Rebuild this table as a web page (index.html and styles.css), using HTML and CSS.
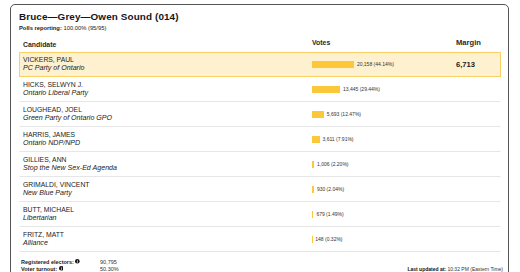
FILE: index.html
```html
<!DOCTYPE html>
<html lang="en">
<head>
<meta charset="utf-8">
<title>Bruce—Grey—Owen Sound (014)</title>
<link rel="stylesheet" href="styles.css">
</head>
<body>
<div class="card">
  <h1 class="title">Bruce—Grey—Owen Sound (014)</h1>
  <p class="polls"><b>Polls reporting:</b> 100.00% (95/95)</p>
  <div class="table">
    <div class="row head">
      <div class="cand">Candidate</div>
      <div class="votes">Votes</div>
      <div class="margin">Margin</div>
    </div>
    <div class="row lead">
      <div class="cand"><div class="name">VICKERS, PAUL</div><div class="party">PC Party of Ontario</div></div>
      <div class="votes"><span class="bar" style="width:41.9px"></span><span class="num">20,158 (44.14%)</span></div>
      <div class="margin">6,713</div>
    </div>
    <div class="row">
      <div class="cand"><div class="name">HICKS, SELWYN J.</div><div class="party">Ontario Liberal Party</div></div>
      <div class="votes"><span class="bar" style="width:28px"></span><span class="num">13,445 (29.44%)</span></div>
      <div class="margin"></div>
    </div>
    <div class="row">
      <div class="cand"><div class="name">LOUGHEAD, JOEL</div><div class="party">Green Party of Ontario GPO</div></div>
      <div class="votes"><span class="bar" style="width:11.8px"></span><span class="num">5,693 (12.47%)</span></div>
      <div class="margin"></div>
    </div>
    <div class="row">
      <div class="cand"><div class="name">HARRIS, JAMES</div><div class="party">Ontario NDP/NPD</div></div>
      <div class="votes"><span class="bar" style="width:7.5px"></span><span class="num">3,611 (7.91%)</span></div>
      <div class="margin"></div>
    </div>
    <div class="row">
      <div class="cand"><div class="name">GILLIES, ANN</div><div class="party">Stop the New Sex-Ed Agenda</div></div>
      <div class="votes"><span class="bar" style="width:2.1px"></span><span class="num">1,006 (2.20%)</span></div>
      <div class="margin"></div>
    </div>
    <div class="row">
      <div class="cand"><div class="name">GRIMALDI, VINCENT</div><div class="party">New Blue Party</div></div>
      <div class="votes"><span class="bar" style="width:1.9px"></span><span class="num">930 (2.04%)</span></div>
      <div class="margin"></div>
    </div>
    <div class="row">
      <div class="cand"><div class="name">BUTT, MICHAEL</div><div class="party">Libertarian</div></div>
      <div class="votes"><span class="bar" style="width:1.4px"></span><span class="num">679 (1.49%)</span></div>
      <div class="margin"></div>
    </div>
    <div class="row">
      <div class="cand"><div class="name">FRITZ, MATT</div><div class="party">Alliance</div></div>
      <div class="votes"><span class="bar" style="width:0.3px"></span><span class="num">148 (0.32%)</span></div>
      <div class="margin"></div>
    </div>
  </div>
  <div class="footer">
    <div class="stats">
      <div class="label">Registered electors: <svg class="info" viewBox="0 0 10 10"><circle cx="5" cy="5" r="5" fill="#111"/><rect x="4.2" y="4.2" width="1.6" height="4" fill="#fff"/><circle cx="5" cy="2.7" r="0.9" fill="#fff"/></svg></div>
      <div class="value">90,795</div>
      <div class="label">Voter turnout: <svg class="info" viewBox="0 0 10 10"><circle cx="5" cy="5" r="5" fill="#111"/><rect x="4.2" y="4.2" width="1.6" height="4" fill="#fff"/><circle cx="5" cy="2.7" r="0.9" fill="#fff"/></svg></div>
      <div class="value">50.30%</div>
    </div>
    <div class="updated"><b>Last updated at:</b> 10:32 PM (Eastern Time)</div>
  </div>
</div>
</body>
</html>
```

FILE: styles.css
```css
html, body {
  margin: 0;
  padding: 0;
  background: #fff;
}
body {
  font-family: "Liberation Sans", Arial, sans-serif;
  color: #1c1c1c;
}
.card {
  margin: 4px 0 0 10px;
  width: 499px;
  box-sizing: border-box;
  height: 300px;
  border: 1px solid #555;
  border-radius: 5px;
  padding: 6px 7px 0 8px;
}
.title {
  margin: 0;
  font-size: 9.9px;
  line-height: 12px;
  font-weight: bold;
  letter-spacing: 0.12px;
  color: #161616;
}
.polls {
  margin: 1px 0 0;
  font-size: 5.8px;
  line-height: 8px;
  color: #222;
}
.polls b {
  font-weight: bold;
}
.table {
  display: flex;
  flex-direction: column;
}
.row {
  display: grid;
  grid-template-columns: 289px 144px 1fr;
  height: 25px;
  box-sizing: border-box;
  border: 1px solid transparent;
  border-bottom-color: #e6e6e6;
  padding-left: 3px;
  align-items: center;
}
.row.head {
  height: 20px;
  border: 0;
  padding: 6px 0 0 4px;
  align-items: start;
  font-size: 6.9px;
  line-height: 10px;
  font-weight: bold;
  color: #2a2a2a;
}
.row.lead {
  background: #fdf1cf;
  border: 1px solid #f8d064;
}
.cand {
  align-self: start;
  padding-top: 1.5px;
}
.name {
  font-size: 6.8px;
  line-height: 9px;
  color: #222;
}
.party {
  font-size: 7.1px;
  line-height: 9px;
  font-style: italic;
  color: #222;
}
.votes {
  display: flex;
  align-items: center;
  gap: 3px;
}
.head .votes, .head .margin {
  display: block;
}
.bar {
  display: block;
  height: 7px;
  background: #fcc83a;
}
.num {
  font-size: 5px;
  line-height: 7px;
  color: #333;
}
.margin {
  font-size: 7.6px;
  font-weight: bold;
}
.footer {
  display: flex;
  justify-content: space-between;
  align-items: flex-end;
  padding: 6.5px 0 0 2px;
  width: 482px;
}
.stats {
  display: grid;
  grid-template-columns: 79px auto;
  font-size: 5.5px;
  line-height: 7px;
}
.label {
  font-weight: bold;
  color: #222;
}
.value {
  color: #333;
}
.info {
  width: 4.6px;
  height: 4.6px;
  vertical-align: -0.5px;
}
.updated {
  font-size: 5px;
  line-height: 7px;
  color: #333;
}
.updated b {
  color: #111;
}
```
